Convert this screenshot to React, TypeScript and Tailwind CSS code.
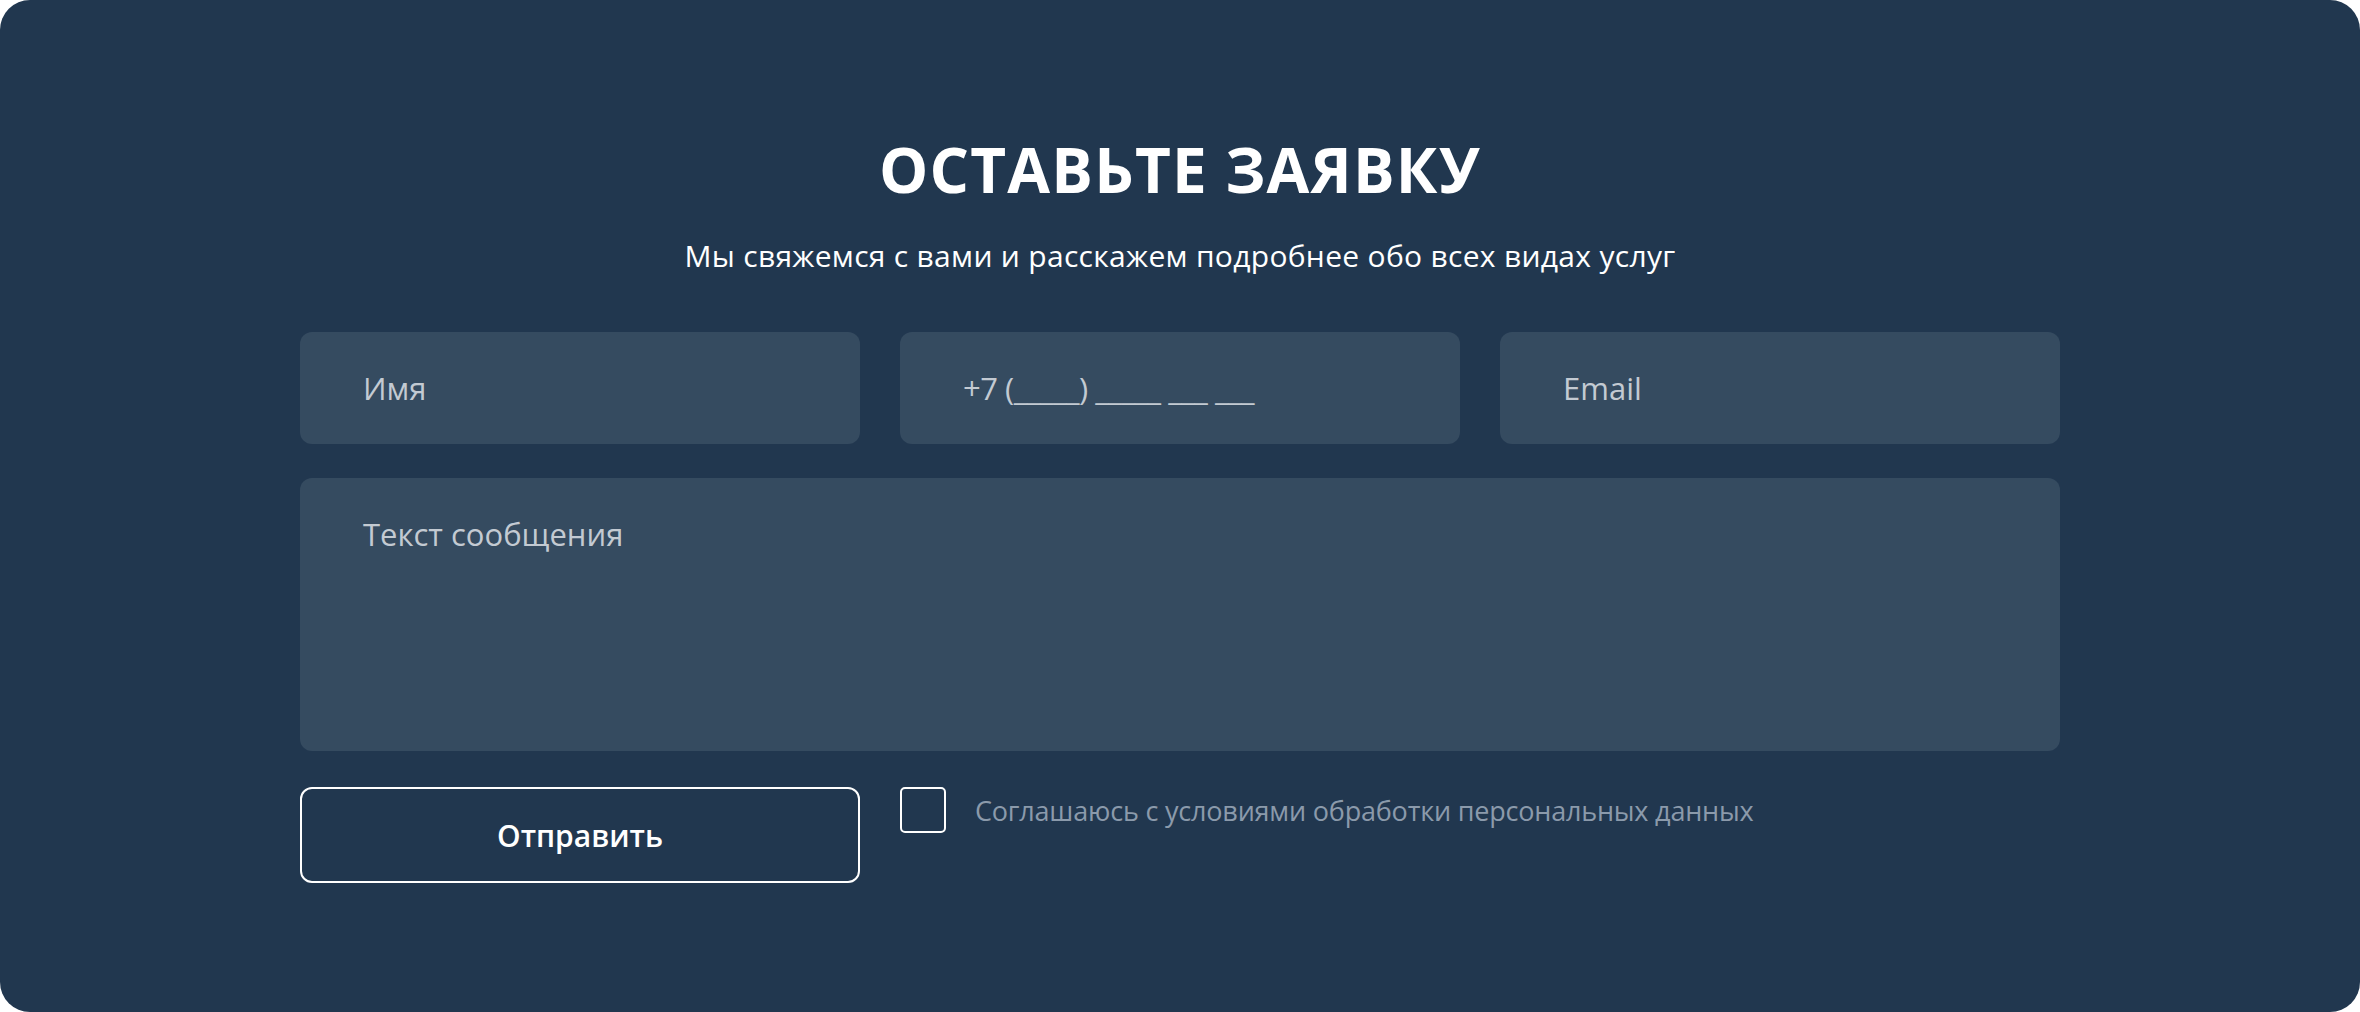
import React from "react";

export default function App() {
  return (
    <div className="w-[2360px] h-[1012px] bg-white" style={{ fontFamily: '"Open Sans", "Noto Sans", sans-serif' }}>
      <div className="h-full rounded-[30px] bg-[#21374f] flex flex-col items-center pt-[138px] font-['Open_Sans','Noto_Sans',sans-serif]">
        <h1 className="text-[62px] font-bold leading-none tracking-[1.2px] text-white">ОСТАВЬТЕ ЗАЯВКУ</h1>
        <p className="mt-[41px] text-[30px] leading-none tracking-[0.3px] text-white">
          Мы свяжемся с вами и расскажем подробнее обо всех видах услуг
        </p>
        <form className="mt-[61px] w-[1760px] flex flex-col" onSubmit={(e) => e.preventDefault()}>
          <div className="grid grid-cols-3 gap-[40px]">
            <input
              type="text"
              placeholder="Имя"
              className="h-[112px] rounded-[12px] bg-[#354b60] px-[63px] text-[31px] text-white placeholder:text-[#c3cad2] outline-none"
            />
            <input
              type="tel"
              placeholder="+7 (_____) _____ ___ ___"
              className="h-[112px] rounded-[12px] bg-[#354b60] px-[63px] text-[31px] tracking-[-0.5px] text-white placeholder:text-[#c3cad2] outline-none"
            />
            <input
              type="email"
              placeholder="Email"
              className="h-[112px] rounded-[12px] bg-[#354b60] px-[63px] text-[31px] text-white placeholder:text-[#c3cad2] outline-none"
            />
          </div>
          <textarea
            placeholder="Текст сообщения"
            className="mt-[34px] h-[273px] resize-none rounded-[12px] bg-[#354b60] px-[63px] pt-[36px] text-[31px] leading-[40px] text-white placeholder:text-[#c3cad2] outline-none"
          />
          <div className="mt-[36px] grid grid-cols-3 gap-[40px] items-start">
            <button
              type="submit"
              className="h-[96px] rounded-[12px] border-2 border-white bg-transparent text-[30px] font-semibold text-white"
            >
              Отправить
            </button>
            <label className="col-span-2 flex items-center gap-[29px]">
              <span className="block w-[46px] h-[46px] shrink-0 rounded-[5px] border-2 border-white" />
              <input type="checkbox" className="hidden" />
              <span className="text-[27px] leading-none tracking-[-0.2px] text-[#8b9aab]">
                Соглашаюсь с условиями обработки персональных данных
              </span>
            </label>
          </div>
        </form>
      </div>
    </div>
  );
}
